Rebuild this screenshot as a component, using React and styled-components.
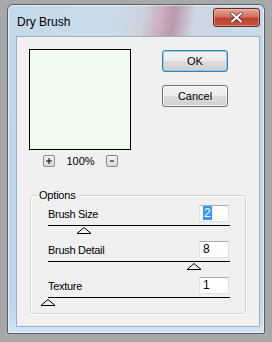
import React from "react";
import styled, { createGlobalStyle } from "styled-components";

const GlobalStyle = createGlobalStyle`
  body {
    margin: 0;
    background: #a8a8a8;
    font-family: "Liberation Sans", Arial, sans-serif;
  }
`;

const Screen = styled.div`
  width: 272px;
  height: 342px;
  box-sizing: border-box;
  padding: 4px 7px 8px 7px;
  background: #a8a8a8;
`;

const Window = styled.div`
  width: 258px;
  height: 330px;
  box-sizing: border-box;
  display: flex;
  flex-direction: column;
  padding: 0 4px 6px 8px;
  border: 1px solid #56626c;
  border-radius: 6px 6px 2px 2px;
  background:
    linear-gradient(
        100deg,
        #c3d8e9 0%,
        #c9dcea 40%,
        #cdd2de 52%,
        #c9aabd 60%,
        #b898ad 64%,
        #cdd6e2 72%,
        #c5dbec 100%
      )
      top / 100% 36px no-repeat,
    linear-gradient(#c3d8e9, #bcd6ec 90%, #cfe3f3);
  box-shadow: inset 0 0 0 1px rgba(255, 255, 255, 0.55);
`;

const TitleBar = styled.div`
  height: 31px;
  flex: none;
  display: flex;
  justify-content: space-between;
  align-items: flex-start;
`;

const Title = styled.div`
  padding: 10px 0 0 1px;
  font-size: 12px;
  line-height: 14px;
  color: #000;
`;

const CloseButton = styled.div`
  width: 47px;
  height: 19px;
  margin-top: 3px;
  box-sizing: border-box;
  display: flex;
  align-items: center;
  justify-content: center;
  border: 1px solid #6a2a22;
  border-radius: 3px;
  background: linear-gradient(#e6a796 0%, #d1705e 45%, #bb4330 55%, #c8573f 100%);
  box-shadow: inset 0 0 0 1px rgba(255, 220, 210, 0.35);
`;

const Client = styled.div`
  flex: 1;
  box-sizing: border-box;
  background: #f0f0f0;
  border: 1px solid #9bb0c4;
  padding: 12px 12px 0 12px;
`;

const TopRow = styled.div`
  display: flex;
  align-items: flex-start;
`;

const PreviewColumn = styled.div`
  width: 102px;
  display: flex;
  flex-direction: column;
`;

const Preview = styled.div`
  width: 102px;
  height: 101px;
  box-sizing: border-box;
  border: 1px solid #000;
  background: #f0fbed;
`;

const ZoomRow = styled.div`
  margin-top: 5px;
  height: 12px;
  display: flex;
  align-items: center;
  justify-content: center;
  gap: 11px;
  padding-left: 1px;
  font-size: 11px;
`;

const ZoomButton = styled.div`
  width: 12px;
  height: 12px;
  box-sizing: border-box;
  border: 1px solid #8a8a8a;
  border-radius: 2px;
  background: linear-gradient(#f6f6f6, #d9d9d9);
  display: flex;
  align-items: center;
  justify-content: center;
`;

const ButtonColumn = styled.div`
  margin-left: 31px;
  margin-top: 1px;
  display: flex;
  flex-direction: column;
  gap: 13px;
`;

const Button = styled.div`
  width: 66px;
  height: 22px;
  box-sizing: border-box;
  display: flex;
  align-items: center;
  justify-content: center;
  font-size: 11px;
  color: #000;
  border: 1px solid ${(p) => (p.$default ? "#3c7fb1" : "#707070")};
  border-radius: 3px;
  background: linear-gradient(#f2f2f2 0%, #ebebeb 50%, #dddddd 51%, #cfcfcf 100%);
  box-shadow: inset 0 0 0 1px
    ${(p) => (p.$default ? "rgba(120, 200, 240, 0.8)" : "rgba(255, 255, 255, 0.7)")};
`;

const Group = styled.fieldset`
  margin: 22px 0 0 1px;
  width: 216px;
  height: 125px;
  box-sizing: border-box;
  padding: 3px 15px 0 17px;
  border: 1px solid #d5d5d5;
  border-radius: 3px;
  box-shadow: inset 1px 1px 0 #fff, 1px 1px 0 #fff;
`;

const Legend = styled.legend`
  margin-left: -11px;
  padding: 0 2px;
  font-size: 11px;
  line-height: 13px;
  letter-spacing: -0.2px;
  color: #000;
`;

const SliderRow = styled.div`
  display: flex;
  flex-direction: column;
`;

const RowHeader = styled.div`
  height: 17px;
  display: flex;
  align-items: center;
  justify-content: space-between;
  padding-right: 1px;
`;

const Label = styled.span`
  font-size: 11px;
  letter-spacing: -0.3px;
  color: #000;
`;

const ValueBox = styled.div`
  width: 30px;
  height: 17px;
  box-sizing: border-box;
  border: 1px solid #dfe3e8;
  border-top-color: #abadb3;
  background: #fff;
  padding: 1px 0 0 3px;
  font-size: 12px;
  line-height: 13px;
  color: #000;
`;

const Selected = styled.span`
  background: #3399ff;
  color: #fff;
  padding: 0 1px;
`;

const Track = styled.div`
  position: relative;
  margin-top: 3px;
  height: 16px;
  border-top: 1px solid #000;
  box-sizing: border-box;
`;

const Thumb = styled.svg`
  position: absolute;
  top: 1px;
  transform: translateX(-50%);
  display: block;
`;

const sliders = [
  { label: "Brush Size", value: 2, min: 0, max: 10, selected: true },
  { label: "Brush Detail", value: 8, min: 0, max: 10 },
  { label: "Texture", value: 1, min: 1, max: 3 },
];

export default () => {
  return (
    <Screen>
      <GlobalStyle />
      <Window>
        <TitleBar>
          <Title>Dry Brush</Title>
          <CloseButton>
            <svg width="13" height="11" viewBox="0 0 13 11">
              <path d="M2 1.5 L11 9.5 M11 1.5 L2 9.5" stroke="#4a2a2a" strokeWidth="3.6" strokeLinecap="round" />
              <path d="M2 1.5 L11 9.5 M11 1.5 L2 9.5" stroke="#fff" strokeWidth="2.2" strokeLinecap="round" />
            </svg>
          </CloseButton>
        </TitleBar>
        <Client>
          <TopRow>
            <PreviewColumn>
              <Preview />
              <ZoomRow>
                <ZoomButton>
                  <svg width="6" height="6" viewBox="0 0 6 6">
                    <path d="M3 0 V6 M0 3 H6" stroke="#000" strokeWidth="1" />
                  </svg>
                </ZoomButton>
                <span>100%</span>
                <ZoomButton>
                  <svg width="4" height="2" viewBox="0 0 4 2">
                    <path d="M0 1 H4" stroke="#000" strokeWidth="1" />
                  </svg>
                </ZoomButton>
              </ZoomRow>
            </PreviewColumn>
            <ButtonColumn>
              <Button $default>OK</Button>
              <Button>Cancel</Button>
            </ButtonColumn>
          </TopRow>
          <Group>
            <Legend>Options</Legend>
            {sliders.map((s) => (
              <SliderRow key={s.label}>
                <RowHeader>
                  <Label>{s.label}</Label>
                  <ValueBox>{s.selected ? <Selected>{s.value}</Selected> : s.value}</ValueBox>
                </RowHeader>
                <Track>
                  <Thumb
                    width="15"
                    height="7"
                    viewBox="0 0 15 7"
                    style={{ left: `${((s.value - s.min) / (s.max - s.min)) * 100}%` }}
                  >
                    <polygon points="7.5,0.5 14.5,6.5 0.5,6.5" fill="none" stroke="#000" strokeWidth="1" />
                  </Thumb>
                </Track>
              </SliderRow>
            ))}
          </Group>
        </Client>
      </Window>
    </Screen>
  );
};
